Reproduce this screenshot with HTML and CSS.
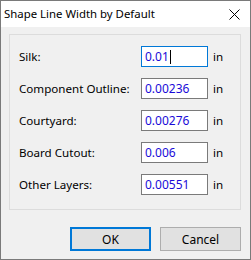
FILE: index.html
```html
<!DOCTYPE html>
<html lang="en">

<head>
    <meta charset="UTF-8">
    <meta name="viewport" content="width=device-width, initial-scale=1.0">
    <title>Shape Line Width by Default</title>
    <link rel="stylesheet" href="styles.css">
</head>

<body>
    <div class="dialog">
        <div class="title-bar">
            <span class="title">Shape Line Width by Default</span>
            <svg class="close" width="11" height="11" viewBox="0 0 11 11">
                <path d="M0.5 0.5 L10.5 10.5 M10.5 0.5 L0.5 10.5" stroke="#000" stroke-width="1" fill="none" />
            </svg>
        </div>
        <div class="content">
            <div class="group-box">
                <div class="row">
                    <label>Silk:</label>
                    <div class="field focused">0.01<span class="caret"></span></div>
                    <span class="unit">in</span>
                </div>
                <div class="row">
                    <label>Component Outline:</label>
                    <div class="field">0.00236</div>
                    <span class="unit">in</span>
                </div>
                <div class="row">
                    <label>Courtyard:</label>
                    <div class="field">0.00276</div>
                    <span class="unit">in</span>
                </div>
                <div class="row">
                    <label>Board Cutout:</label>
                    <div class="field">0.006</div>
                    <span class="unit">in</span>
                </div>
                <div class="row">
                    <label>Other Layers:</label>
                    <div class="field">0.00551</div>
                    <span class="unit">in</span>
                </div>
            </div>
            <div class="button-group">
                <button class="default">OK</button>
                <button>Cancel</button>
            </div>
        </div>
    </div>
</body>

</html>
```

FILE: styles.css
```css
body {
    margin: 0;
    font-family: "Noto Sans", "Open Sans", sans-serif;
    font-size: 11.6px;
    color: #000;
}

.dialog {
    width: 251px;
    height: 260px;
    box-sizing: border-box;
    border: 1px solid #7a7a7a;
    background-color: #f0f0f0;
    display: flex;
    flex-direction: column;
}

.title-bar {
    height: 26px;
    background-color: #fff;
    display: flex;
    align-items: center;
    justify-content: space-between;
    padding: 0 10px 0 3px;
}

.title {
    font-size: 11.4px;
    line-height: 16px;
}

.close {
    display: block;
}

.content {
    padding: 7px 9px 0 8px;
}

.group-box {
    box-sizing: border-box;
    border: 1px solid #dcdcdc;
    height: 176px;
    padding: 11px 0 0 9px;
}

.row {
    display: flex;
    align-items: center;
    height: 21px;
    margin-bottom: 11px;
}

.row label {
    width: 122px;
}

.field {
    box-sizing: border-box;
    width: 67px;
    height: 21px;
    border: 1px solid #7a7a7a;
    background-color: #fff;
    color: #1a0ad8;
    font-size: 12px;
    padding-left: 3px;
    display: flex;
    align-items: center;
}

.field.focused {
    border-color: #0078d7;
}

.caret {
    display: inline-block;
    width: 1px;
    height: 14px;
    background-color: #000;
    margin-left: 1px;
}

.unit {
    margin-left: 5px;
}

.button-group {
    display: flex;
    justify-content: flex-end;
    gap: 9px;
    margin-top: 17px;
}

button {
    width: 81px;
    height: 24px;
    font-family: inherit;
    font-size: 12px;
    color: #000;
    background-color: #e1e1e1;
    border: 1px solid #adadad;
    padding: 0;
}

button.default {
    border: 2px solid #0078d7;
}
```
